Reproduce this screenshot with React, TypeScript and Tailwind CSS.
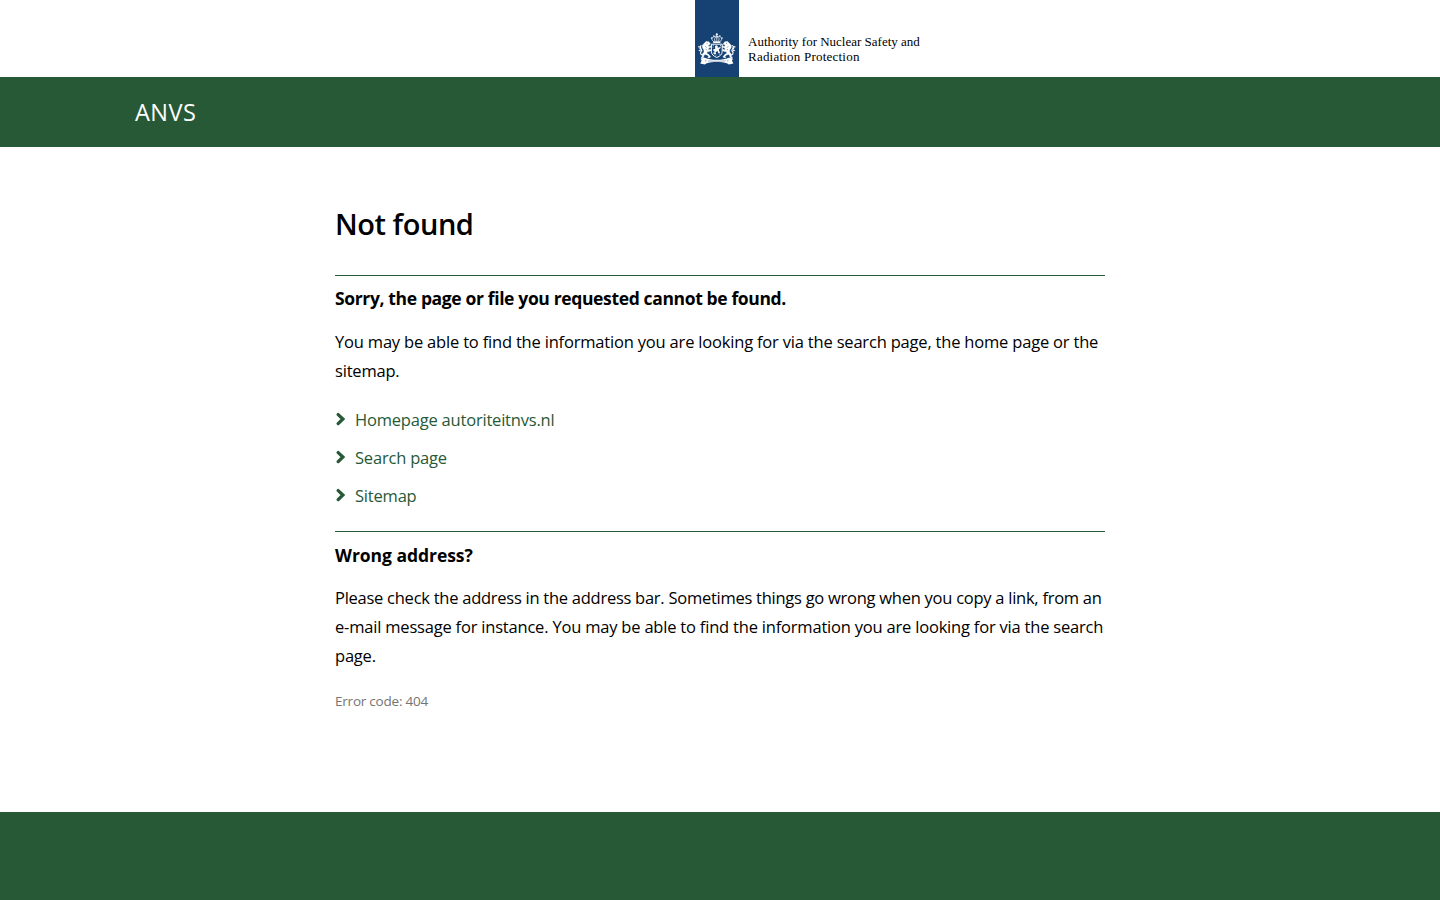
import type { ReactNode } from "react";

function Lion() {
  return (
    <g>
      <path
        d="M10.2 42.2l1.2-.9 1.3.5.9-.3.7 1.1 1 .8-.3 1.2-1.6.5.3 1.3 2.6-.5.3 1-2.7 1.2-.6 1.6 2.4-.3.7 1-2.1 1.1-2 .3-.5 1.4 2.1 1.4 1.7 2.1-.5.9-2 .3-.3-.8 1-.4-1.6-1.6-2.4-.7-1.1 1.6.2 1.6-1.9.4-1-.7 1.3-.9.1-2.4 1.6-1.9-.2-2.3-1.4-2.1-.2-2.2z"
        fill="#fff"
        stroke="#fff"
        strokeWidth="0.35"
      />
      <path
        d="M7.8 55.2l-2-1 -.2-2 1.2-1.6-.7-1.7-1.6-.5M5.6 50.1l-1.8.7M5.9 48.8l-.6-2.1-2.1.2M5.3 46.7l.9-1.5"
        fill="none"
        stroke="#fff"
        strokeWidth="1.15"
      />
      <path d="M11.5 43.3h1.1M10.4 46.3l1.1 1.3M10.6 49.3l1.2.6" stroke="#154273" strokeWidth="0.5" />
    </g>
  );
}

function CoatOfArms() {
  return (
    <svg viewBox="0 0 44 77" className="block h-[77px] w-[44px]" aria-hidden="true">
      <rect width="44" height="77" fill="#154273" />
      <g fill="#fff">
        <circle cx="21.8" cy="34.4" r="0.9" />
        <path d="M21.4 33.1h.8v3h-.8zM20.6 33.9h2.4v.6h-2.4z" />
        <circle cx="18.8" cy="36" r="0.75" />
        <circle cx="24.8" cy="36" r="0.75" />
        <circle cx="16.6" cy="38" r="0.75" />
        <circle cx="27" cy="38" r="0.75" />
        <path d="M17.9 41.3h7.8l-.4 1.8h-7z" />
      </g>
      <path
        d="M18.3 41.2c-3-2.4-.8-5 3.5-4.8 4.3-.2 6.5 2.4 3.5 4.8M20 41c-1-1.8-.3-3.8 1.8-4.4 2.1.6 2.8 2.6 1.8 4.4M21.8 36.4v4.8"
        fill="none"
        stroke="#fff"
        strokeWidth="0.75"
      />
      <path d="M16.4 44.2h10.8v7.3c0 2.9-2.1 4.6-5.4 6-3.3-1.4-5.4-3.1-5.4-6z" fill="#154273" stroke="#fff" strokeWidth="1" />
      <path
        d="M20 46.1l1.7-.8 1.2.9-.5 1.3 1.7.1 1.4-1 .1 1.4-1.7 1.2.1 1.5 1 1.6-.8 1.2-1.3-.4.4-1.1-1.3-.9-1.4 1.5.5 1.1-1.3.8-1.4-.7.8-.9.2-2-1.2-.3-.2-1.1 2.3-.7z"
        fill="#fff"
      />
      <path
        d="M17.7 45.5h1M17.6 47.2h.9M25 45.5h1M18 53h.9M24.2 54.1h.9M20.5 55h1"
        stroke="#fff"
        strokeWidth="0.7"
      />
      <Lion />
      <g transform="translate(43.6 0) scale(-1 1)">
        <Lion />
      </g>
      <path
        d="M5.6 58.6l4.3-.9c3.4 1.6 7.5 2 11.9 2s8.5-.4 11.9-2l4.3.9-1 2.2 1.4 2.8-4.6.8-1.4-1c-3.2-1-7-1.3-10.6-1.3s-7.4.3-10.6 1.3l-1.4 1-4.6-.8 1.4-2.8z"
        fill="#fff"
      />
      <path
        d="M10.6 59.5l.3 2.1M33 59.5l-.3 2.1M13 60.8c5.8.6 11.8.6 17.6 0"
        fill="none"
        stroke="#154273"
        strokeWidth="0.4"
      />
    </svg>
  );
}

function LinkItem({ children }: { children: ReactNode }) {
  return (
    <li className="flex h-[38px] items-center text-[16.5px] tracking-[-0.2px] text-[#275937]">
      <svg viewBox="0 0 10 14" className="-mt-0.5 mr-2.5 h-3.5 w-2.5" aria-hidden="true">
        <path d="M3.2 2.6L7.9 7l-4.7 4.6" fill="none" stroke="#275937" strokeWidth="3.3" strokeLinecap="round" />
      </svg>
      <a href="#">{children}</a>
    </li>
  );
}

export default function App() {
  return (
    <div className="flex h-[900px] flex-col overflow-hidden bg-white font-['Open_Sans','Noto_Sans',sans-serif] text-black">
      <header>
        <div className="flex h-[77px] pl-[695px]">
          <CoatOfArms />
          <p className="pt-[34px] pl-[9px] font-['Liberation_Serif',serif] text-[13px] leading-[15px] whitespace-nowrap">
            Authority for Nuclear Safety and
            <br />
            <span className="tracking-[0.22px]">Radiation Protection</span>
          </p>
        </div>
        <div className="flex h-[70px] items-center bg-[#275937] pt-0.5 pl-[135px] text-[23.5px] tracking-[0.5px] text-white">
          <span>ANVS</span>
        </div>
      </header>

      <main className="mx-auto w-[770px] flex-1 pt-[57px] whitespace-nowrap">
        <h1 className="h-[71px] text-[29px] leading-10 font-semibold tracking-[-0.45px]">Not found</h1>
        <section className="h-64 border-t border-[#275937] pt-2">
          <h2 className="text-[17.5px] leading-[29px] font-bold tracking-[-0.36px]">
            Sorry, the page or file you requested cannot be found.
          </h2>
          <p className="mt-[14px] text-[16.5px] leading-[29px]">
            <span className="tracking-[-0.19px]">
              You may be able to find the information you are looking for via the search page, the home page or the
            </span>
            <br />
            <span className="tracking-[-0.2px]">sitemap.</span>
          </p>
          <ul className="mt-4">
            <LinkItem>Homepage autoriteitnvs.nl</LinkItem>
            <LinkItem>Search page</LinkItem>
            <LinkItem>Sitemap</LinkItem>
          </ul>
        </section>
        <section className="border-t border-[#275937] pt-[9px]">
          <h2 className="text-[17.5px] leading-[29px] font-bold tracking-[-0.04px]">Wrong address?</h2>
          <p className="mt-[13px] text-[16.5px] leading-[29px]">
            <span className="tracking-[-0.26px]">
              Please check the address in the address bar. Sometimes things go wrong when you copy a link, from an
            </span>
            <br />
            <span className="tracking-[-0.2px]">
              e-mail message for instance. You may be able to find the information you are looking for via the search
            </span>
            <br />
            <span className="tracking-[-0.2px]">page.</span>
          </p>
          <p className="mt-[19px] text-[13.5px] leading-6 tracking-[-0.22px] text-[#757575]">Error code: 404</p>
        </section>
      </main>

      <footer className="h-[88px] bg-[#275937]" />
    </div>
  );
}
